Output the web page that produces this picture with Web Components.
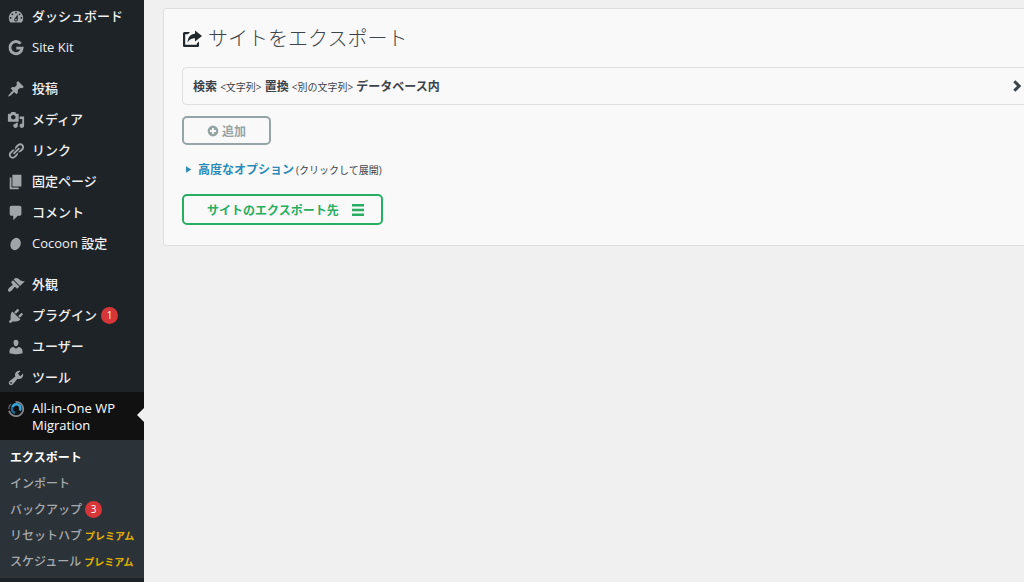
<!DOCTYPE html>
<html lang="ja">
<head>
<meta charset="UTF-8">
<meta name="viewport" content="width=device-width, initial-scale=1">
<title>サイトをエクスポート</title>
<style>
    :root {
        --menu-bg: #1d2327;
        --submenu-bg: #2c3338;
        --page-bg: #f0f0f0;
        --icon: #a0a5aa;
        --danger: #d63638;
        --green: #27ae60;
        --grey: #95a5a6;
    }
    body {
        margin: 0;
        background: var(--page-bg);
        font-family: "Open Sans", "Noto Sans CJK JP", sans-serif;
        font-size: 12px;
        color: #3c434a;
    }
</style>
</head>
<body>
<admin-layout>
    <admin-menu slot="menu">
        <menu-group>
            <menu-item icon="dashboard">ダッシュボード</menu-item>
            <menu-item icon="google" light>Site Kit</menu-item>
        </menu-group>
        <menu-group>
            <menu-item icon="pin">投稿</menu-item>
            <menu-item icon="media">メディア</menu-item>
            <menu-item icon="link">リンク</menu-item>
            <menu-item icon="pages">固定ページ</menu-item>
            <menu-item icon="comment">コメント</menu-item>
            <menu-item icon="cocoon">Cocoon 設定</menu-item>
        </menu-group>
        <menu-group>
            <menu-item icon="brush">外観</menu-item>
            <menu-item icon="plugin">プラグイン<count-badge slot="badge">1</count-badge></menu-item>
            <menu-item icon="user">ユーザー</menu-item>
            <menu-item icon="tool">ツール</menu-item>
            <menu-item icon="migration" current light>All-in-One WP Migration</menu-item>
            <sub-menu>
                <sub-item current>エクスポート</sub-item>
                <sub-item>インポート</sub-item>
                <sub-item>バックアップ<count-badge slot="extra">3</count-badge></sub-item>
                <sub-item>リセットハブ<premium-tag slot="extra">プレミアム</premium-tag></sub-item>
                <sub-item>スケジュール<premium-tag slot="extra">プレミアム</premium-tag></sub-item>
            </sub-menu>
        </menu-group>
    </admin-menu>
    <export-card>
        <span slot="title">サイトをエクスポート</span>
        <replace-row></replace-row>
        <outline-button icon="plus">追加</outline-button>
        <advanced-toggle>高度なオプション<span slot="hint">(クリックして展開)</span></advanced-toggle>
        <outline-button kind="primary" end-icon="bars">サイトのエクスポート先</outline-button>
    </export-card>
</admin-layout>

<script>
const ICONS = {
    dashboard: '<path d="M3.76 16h12.48c1.1-1.37 1.76-3.11 1.76-5 0-4.42-3.58-8-8-8s-8 3.58-8 8c0 1.89.66 3.63 1.76 5zM10 4c.55 0 1 .45 1 1s-.45 1-1 1-1-.45-1-1 .45-1 1-1zM6 6c.55 0 1 .45 1 1s-.45 1-1 1-1-.45-1-1 .45-1 1-1zm8 0c.55 0 1 .45 1 1s-.45 1-1 1-1-.45-1-1 .45-1 1-1zm-5.37 5.55L12 7v6c0 1.1-.9 2-2 2s-2-.9-2-2c0-.57.24-1.08.63-1.45zM4 10c.55 0 1 .45 1 1s-.45 1-1 1-1-.45-1-1 .45-1 1-1zm12 0c.55 0 1 .45 1 1s-.45 1-1 1-1-.45-1-1 .45-1 1-1zm-5 3c0-.55-.45-1-1-1s-1 .45-1 1 .45 1 1 1 1-.45 1-1z"/>',
    google: '<path d="M15.2 5.2A6.800 6.800 0 1 0 16.800 10.200H10.400" fill="none" stroke="currentColor" stroke-width="3.200"/>',
    pin: '<path d="M10.44 3.02l1.82-1.82 6.36 6.35-1.83 1.82c-1.05-.68-2.48-.57-3.41.36l-.75.75c-.92.93-1.04 2.35-.35 3.41l-1.83 1.82-2.41-2.41-2.8 2.79c-.42.42-3.38 2.71-3.8 2.29s1.86-3.39 2.28-3.81l2.79-2.79L4.1 9.36l1.83-1.82c1.05.69 2.48.57 3.4-.36l.75-.75c.93-.92 1.05-2.35.36-3.41z"/>',
    media: '<path d="M13 11V4c0-.55-.45-1-1-1h-1.67L9 1H5L3.67 3H2c-.55 0-1 .45-1 1v7c0 .55.45 1 1 1h10c.55 0 1-.45 1-1zM7 4.5c1.38 0 2.5 1.12 2.5 2.5S8.38 9.5 7 9.5 4.5 8.38 4.5 7 5.62 4.5 7 4.5zM14 6h5v10.5c0 1.38-1.12 2.5-2.5 2.5S14 17.88 14 16.5s1.12-2.5 2.5-2.5c.17 0 .34.02.5.05V9h-3V6zm-4 8.05V13h2v3.5c0 1.38-1.12 2.5-2.5 2.5S7 17.88 7 16.5 8.12 14 9.5 14c.17 0 .34.02.5.05z"/>',
    link: '<path d="M17.74 2.76c1.68 1.69 1.68 4.41 0 6.1l-1.53 1.52c-1.12 1.12-2.7 1.47-4.14 1.09l2.62-2.61.76-.77.76-.76c.84-.84.84-2.2 0-3.04-.84-.85-2.2-.85-3.04 0l-.77.76-3.38 3.38c-.37-1.44-.02-3.02 1.1-4.14l1.52-1.53c1.69-1.68 4.42-1.68 6.1 0zM8.59 13.43l5.34-5.34c.42-.42.42-1.1 0-1.52-.44-.43-1.13-.39-1.53 0l-5.33 5.34c-.42.42-.42 1.1 0 1.52.44.43 1.13.39 1.52 0zm-.76 2.29l4.14-4.15c.38 1.44.03 3.02-1.09 4.14l-1.52 1.53c-1.69 1.68-4.41 1.68-6.1 0-1.68-1.68-1.68-4.42 0-6.1l1.53-1.52c1.12-1.12 2.7-1.47 4.14-1.1l-4.14 4.15c-.85.84-.85 2.2 0 3.05.84.84 2.2.84 3.04 0z"/>',
    pages: '<path d="M6 15V2h10v13H6zm-1 1h8v2H3V5h2v11z"/>',
    comment: '<path d="M5 2h9c1.1 0 2 .9 2 2v7c0 1.1-.9 2-2 2h-2l-5 5v-5H5c-1.1 0-2-.9-2-2V4c0-1.1.9-2 2-2z"/>',
    cocoon: '<ellipse cx="9.5" cy="10" rx="5.6" ry="7" transform="rotate(24 9.5 10)"/>',
    brush: '<path d="M14.48 11.06L7.41 3.99l1.5-1.5c.5-.56 2.3-.47 3.51.32 1.21.8 1.43 1.28 2.91 2.1 1.18.64 2.45 1.26 4.45.85zm-.71.71L6.7 4.7 4.93 6.47c-.39.39-.39 1.02 0 1.41l1.06 1.06c.39.39.39 1.03 0 1.42-.6.6-1.43 1.11-2.21 1.69-.35.26-.7.53-1.01.84C1.43 14.23.4 16.08 1.4 17.07c.99 1 2.84-.03 4.18-1.36.31-.31.58-.66.85-1.02.57-.78 1.08-1.61 1.69-2.21.39-.39 1.02-.39 1.41 0l1.06 1.06c.39.39 1.02.39 1.41 0z"/>',
    plugin: '<path d="M13.11 4.36L9.87 7.6 8 5.73l3.24-3.24c.35-.34 1.05-.2 1.56.32.52.51.66 1.21.31 1.55zm-8 1.77l.91-1.12 9.01 9.01-1.19.84c-.71.71-2.63 1.16-3.82 1.16H6.14L4.9 17.26c-.59.59-1.54.59-2.12 0-.59-.58-.59-1.53 0-2.12l1.24-1.24v-3.88c0-1.13.4-3.19 1.09-3.89zm7.26 3.97l3.24-3.24c.34-.35 1.04-.21 1.55.31.52.51.66 1.21.31 1.55l-3.24 3.25z"/>',
    user: '<path d="M10 9.25c-2.27 0-2.73-3.44-2.73-3.44C7 4.02 7.82 2 9.97 2c2.16 0 2.98 2.02 2.71 3.81 0 0-.41 3.44-2.68 3.44zm0 2.57L12.72 10c2.39 0 4.52 2.33 4.52 4.53v2.49s-3.65 1.13-7.24 1.13c-3.65 0-7.24-1.13-7.24-1.13v-2.49c0-2.25 1.94-4.48 4.47-4.48z"/>',
    tool: '<path d="M16.68 9.77c-1.34 1.34-3.3 1.67-4.95.99l-5.41 6.52c-.99.99-2.59.99-3.58 0s-.99-2.59 0-3.57l6.52-5.42c-.68-1.65-.35-3.61.99-4.95 1.28-1.28 3.12-1.62 4.72-1.06l-2.89 2.89 2.82 2.82 2.86-2.87c.53 1.58.18 3.39-1.08 4.65zM3.81 16.21c.4.39 1.04.39 1.43 0 .4-.4.4-1.04 0-1.43-.39-.4-1.03-.4-1.43 0-.39.39-.39 1.03 0 1.43z"/>',
    migration: '<g fill="none"><path d="M9.500 2A8 8 0 1 1 2.300 12" stroke="#85898d" stroke-width="2"/><path d="M2 10A8 8 0 0 1 4.300 4.400" stroke="#5d6266" stroke-width="1.600"/><path d="M9 14.400A4.500 4.500 0 0 1 6.400 7.200" stroke="#1b6f9c" stroke-width="2.600"/><path d="M6.200 7.600A4.500 4.500 0 1 1 14.200 11.600" stroke="#36a9e1" stroke-width="2.800"/></g>',
    share: '<path d="M8 3H2.6C1.7 3 1 3.7 1 4.6v11.8c0 .9.7 1.6 1.6 1.6h12.8c.9 0 1.6-.7 1.6-1.6V12.6l-2.2 1.8v1.4H3.2V5.2H6z"/><path d="M13 1.6L20 7l-7 5.4V9.2C9.4 9.2 7.4 10.4 5.6 13.4 5.8 8.2 8.4 4.8 13 4.7z"/>',
    plus: '<path fill-rule="evenodd" d="M10 1a9 9 0 1 0 0 18a9 9 0 1 0 0-18zM8.5 5h3v3.5H15v3h-3.5V15h-3v-3.5H5v-3h3.5z"/>',
    bars: '<path d="M0 0h20v4H0zM0 8h20v4H0zM0 16h20v4H0z"/>',
    chevron: '<path d="M5.500 2l8 8-8 8" fill="none" stroke="currentColor" stroke-width="5"/>',
    triangle: '<path d="M3 1l15 9-15 9z"/>'
};

class UiIcon extends HTMLElement {
    connectedCallback() {
        const size = this.getAttribute('size') || 18;
        this.attachShadow({ mode: 'open' }).innerHTML = `
            <style>
                :host { display: inline-flex; flex: none; }
                svg { display: block; fill: currentColor; }
            </style>
            <svg width="${size}" height="${size}" viewBox="0 0 20 20" aria-hidden="true">${ICONS[this.getAttribute('name')]}</svg>
        `;
    }
}

class AdminLayout extends HTMLElement {
    connectedCallback() {
        this.attachShadow({ mode: 'open' }).innerHTML = `
            <style>
                :host { display: flex; height: 100vh; overflow: hidden; }
                ::slotted([slot="menu"]) { flex: none; }
                /* the card is wider than the visible area and runs out on the right */
                main { flex: 1; min-width: 0; padding: 8px 0 0 19px; margin-right: -26px; }
            </style>
            <slot name="menu"></slot>
            <main><slot></slot></main>
        `;
    }
}

class AdminMenu extends HTMLElement {
    connectedCallback() {
        this.attachShadow({ mode: 'open' }).innerHTML = `
            <style>
                :host { display: block; width: 144px; background: var(--menu-bg); }
                nav { display: flex; flex-direction: column; gap: 10px; }
            </style>
            <nav><slot></slot></nav>
        `;
    }
}

class MenuGroup extends HTMLElement {
    connectedCallback() {
        this.attachShadow({ mode: 'open' }).innerHTML = `
            <style>
                :host { display: flex; flex-direction: column; }
            </style>
            <slot></slot>
        `;
    }
}

class MenuItem extends HTMLElement {
    connectedCallback() {
        this.attachShadow({ mode: 'open' }).innerHTML = `
            <style>
                :host { display: block; position: relative; }
                a {
                    display: flex;
                    gap: 7px;
                    padding: 8px 7px 6px;
                    color: #f0f0f1;
                    font-size: 13px;
                    font-weight: 500;
                    line-height: 17px;
                    text-decoration: none;
                }
                ui-icon { height: 17px; align-items: center; color: var(--icon); }
                .label { display: flex; align-items: center; gap: 4px; }
                :host([light]) a { font-weight: 400; }
                :host([current]) a { background: #111; color: #fff; }
                :host([current])::after {
                    content: '';
                    position: absolute;
                    right: 0;
                    top: 50%;
                    margin-top: -8px;
                    border: 7px solid transparent;
                    border-left: 0;
                    border-right-color: var(--page-bg);
                }
            </style>
            <a href="#">
                <ui-icon name="${this.getAttribute('icon')}"></ui-icon>
                <span class="label"><span><slot></slot></span><slot name="badge"></slot></span>
            </a>
        `;
    }
}

class SubMenu extends HTMLElement {
    connectedCallback() {
        this.attachShadow({ mode: 'open' }).innerHTML = `
            <style>
                :host { display: block; padding: 4px 0; background: var(--submenu-bg); }
            </style>
            <slot></slot>
        `;
    }
}

class SubItem extends HTMLElement {
    connectedCallback() {
        this.attachShadow({ mode: 'open' }).innerHTML = `
            <style>
                :host { display: block; }
                a {
                    display: flex;
                    align-items: center;
                    gap: 3px;
                    height: 26px;
                    padding-left: 10px;
                    color: #a7aaad;
                    font-size: 12px;
                    font-weight: 500;
                    white-space: nowrap;
                    text-decoration: none;
                }
                :host([current]) a { color: #fff; font-weight: 700; }
            </style>
            <a href="#"><span><slot></slot></span><slot name="extra"></slot></a>
        `;
    }
}

class CountBadge extends HTMLElement {
    connectedCallback() {
        this.attachShadow({ mode: 'open' }).innerHTML = `
            <style>
                :host {
                    display: inline-block;
                    width: 17px;
                    height: 17px;
                    border-radius: 50%;
                    background: var(--danger);
                    color: #fff;
                    font-size: 10px;
                    font-weight: 400;
                    line-height: 17px;
                    text-align: center;
                }
            </style>
            <slot></slot>
        `;
    }
}

class PremiumTag extends HTMLElement {
    connectedCallback() {
        this.attachShadow({ mode: 'open' }).innerHTML = `
            <style>
                :host { color: #e0b000; font-size: 10px; font-weight: 700; }
            </style>
            <slot></slot>
        `;
    }
}

class ExportCard extends HTMLElement {
    connectedCallback() {
        this.attachShadow({ mode: 'open' }).innerHTML = `
            <style>
                :host {
                    display: block;
                    padding: 15px 18px 20px;
                    border: 1px solid #dedede;
                    border-radius: 3px;
                    background: #f9f9f9;
                }
                h1 {
                    display: flex;
                    align-items: center;
                    gap: 6px;
                    margin: 0 0 13px;
                    font-size: 20px;
                    font-weight: 300;
                    line-height: 30px;
                }
                ui-icon { color: #23282d; }
                .body { display: flex; flex-direction: column; align-items: flex-start; }
            </style>
            <h1><ui-icon name="share" size="20"></ui-icon><slot name="title"></slot></h1>
            <div class="body"><slot></slot></div>
        `;
    }
}

class ReplaceRow extends HTMLElement {
    connectedCallback() {
        this.attachShadow({ mode: 'open' }).innerHTML = `
            <style>
                :host { display: block; align-self: stretch; margin-bottom: 11px; }
                button {
                    display: flex;
                    align-items: center;
                    justify-content: space-between;
                    width: 100%;
                    height: 38px;
                    padding: 0 7px 0 10px;
                    border: 1px solid #e0e0e0;
                    border-radius: 4px;
                    background: transparent;
                    color: #3c434a;
                    font: inherit;
                    font-weight: 700;
                }
                small { font-size: 10px; font-weight: 400; }
            </style>
            <button type="button" aria-expanded="false">
                <span>検索 <small>&lt;文字列&gt;</small> 置換 <small>&lt;別の文字列&gt;</small> データベース内</span>
                <ui-icon name="chevron" size="12"></ui-icon>
            </button>
        `;
    }
}

class OutlineButton extends HTMLElement {
    connectedCallback() {
        const icon = this.getAttribute('icon');
        const endIcon = this.getAttribute('end-icon');
        this.attachShadow({ mode: 'open' }).innerHTML = `
            <style>
                :host { display: block; }
                button {
                    display: flex;
                    align-items: center;
                    gap: 3px;
                    height: 29px;
                    padding: 0 23px;
                    border: 2px solid var(--grey);
                    border-radius: 5px;
                    background: transparent;
                    color: var(--grey);
                    font: inherit;
                    font-weight: 700;
                }
                :host([kind="primary"]) button {
                    gap: 13px;
                    height: 31px;
                    padding: 0 17px 0 23px;
                    border-color: var(--green);
                    color: var(--green);
                }
            </style>
            <button type="button">
                ${icon ? `<ui-icon name="${icon}" size="12"></ui-icon>` : ''}
                <span><slot></slot></span>
                ${endIcon ? `<ui-icon name="${endIcon}" size="12"></ui-icon>` : ''}
            </button>
        `;
    }
}

class AdvancedToggle extends HTMLElement {
    connectedCallback() {
        this.attachShadow({ mode: 'open' }).innerHTML = `
            <style>
                :host { display: flex; align-items: center; gap: 2px; height: 20px; margin: 14px 0 15px; padding-left: 3px; }
                a {
                    display: flex;
                    align-items: center;
                    gap: 6px;
                    color: #2a8ab8;
                    font-weight: 700;
                    text-decoration: none;
                }
                small { font-size: 10px; }
            </style>
            <a href="#"><ui-icon name="triangle" size="7"></ui-icon><span><slot></slot></span></a>
            <small><slot name="hint"></slot></small>
        `;
    }
}

customElements.define('ui-icon', UiIcon);
customElements.define('admin-layout', AdminLayout);
customElements.define('admin-menu', AdminMenu);
customElements.define('menu-group', MenuGroup);
customElements.define('menu-item', MenuItem);
customElements.define('sub-menu', SubMenu);
customElements.define('sub-item', SubItem);
customElements.define('count-badge', CountBadge);
customElements.define('premium-tag', PremiumTag);
customElements.define('export-card', ExportCard);
customElements.define('replace-row', ReplaceRow);
customElements.define('outline-button', OutlineButton);
customElements.define('advanced-toggle', AdvancedToggle);
</script>
</body>
</html>
